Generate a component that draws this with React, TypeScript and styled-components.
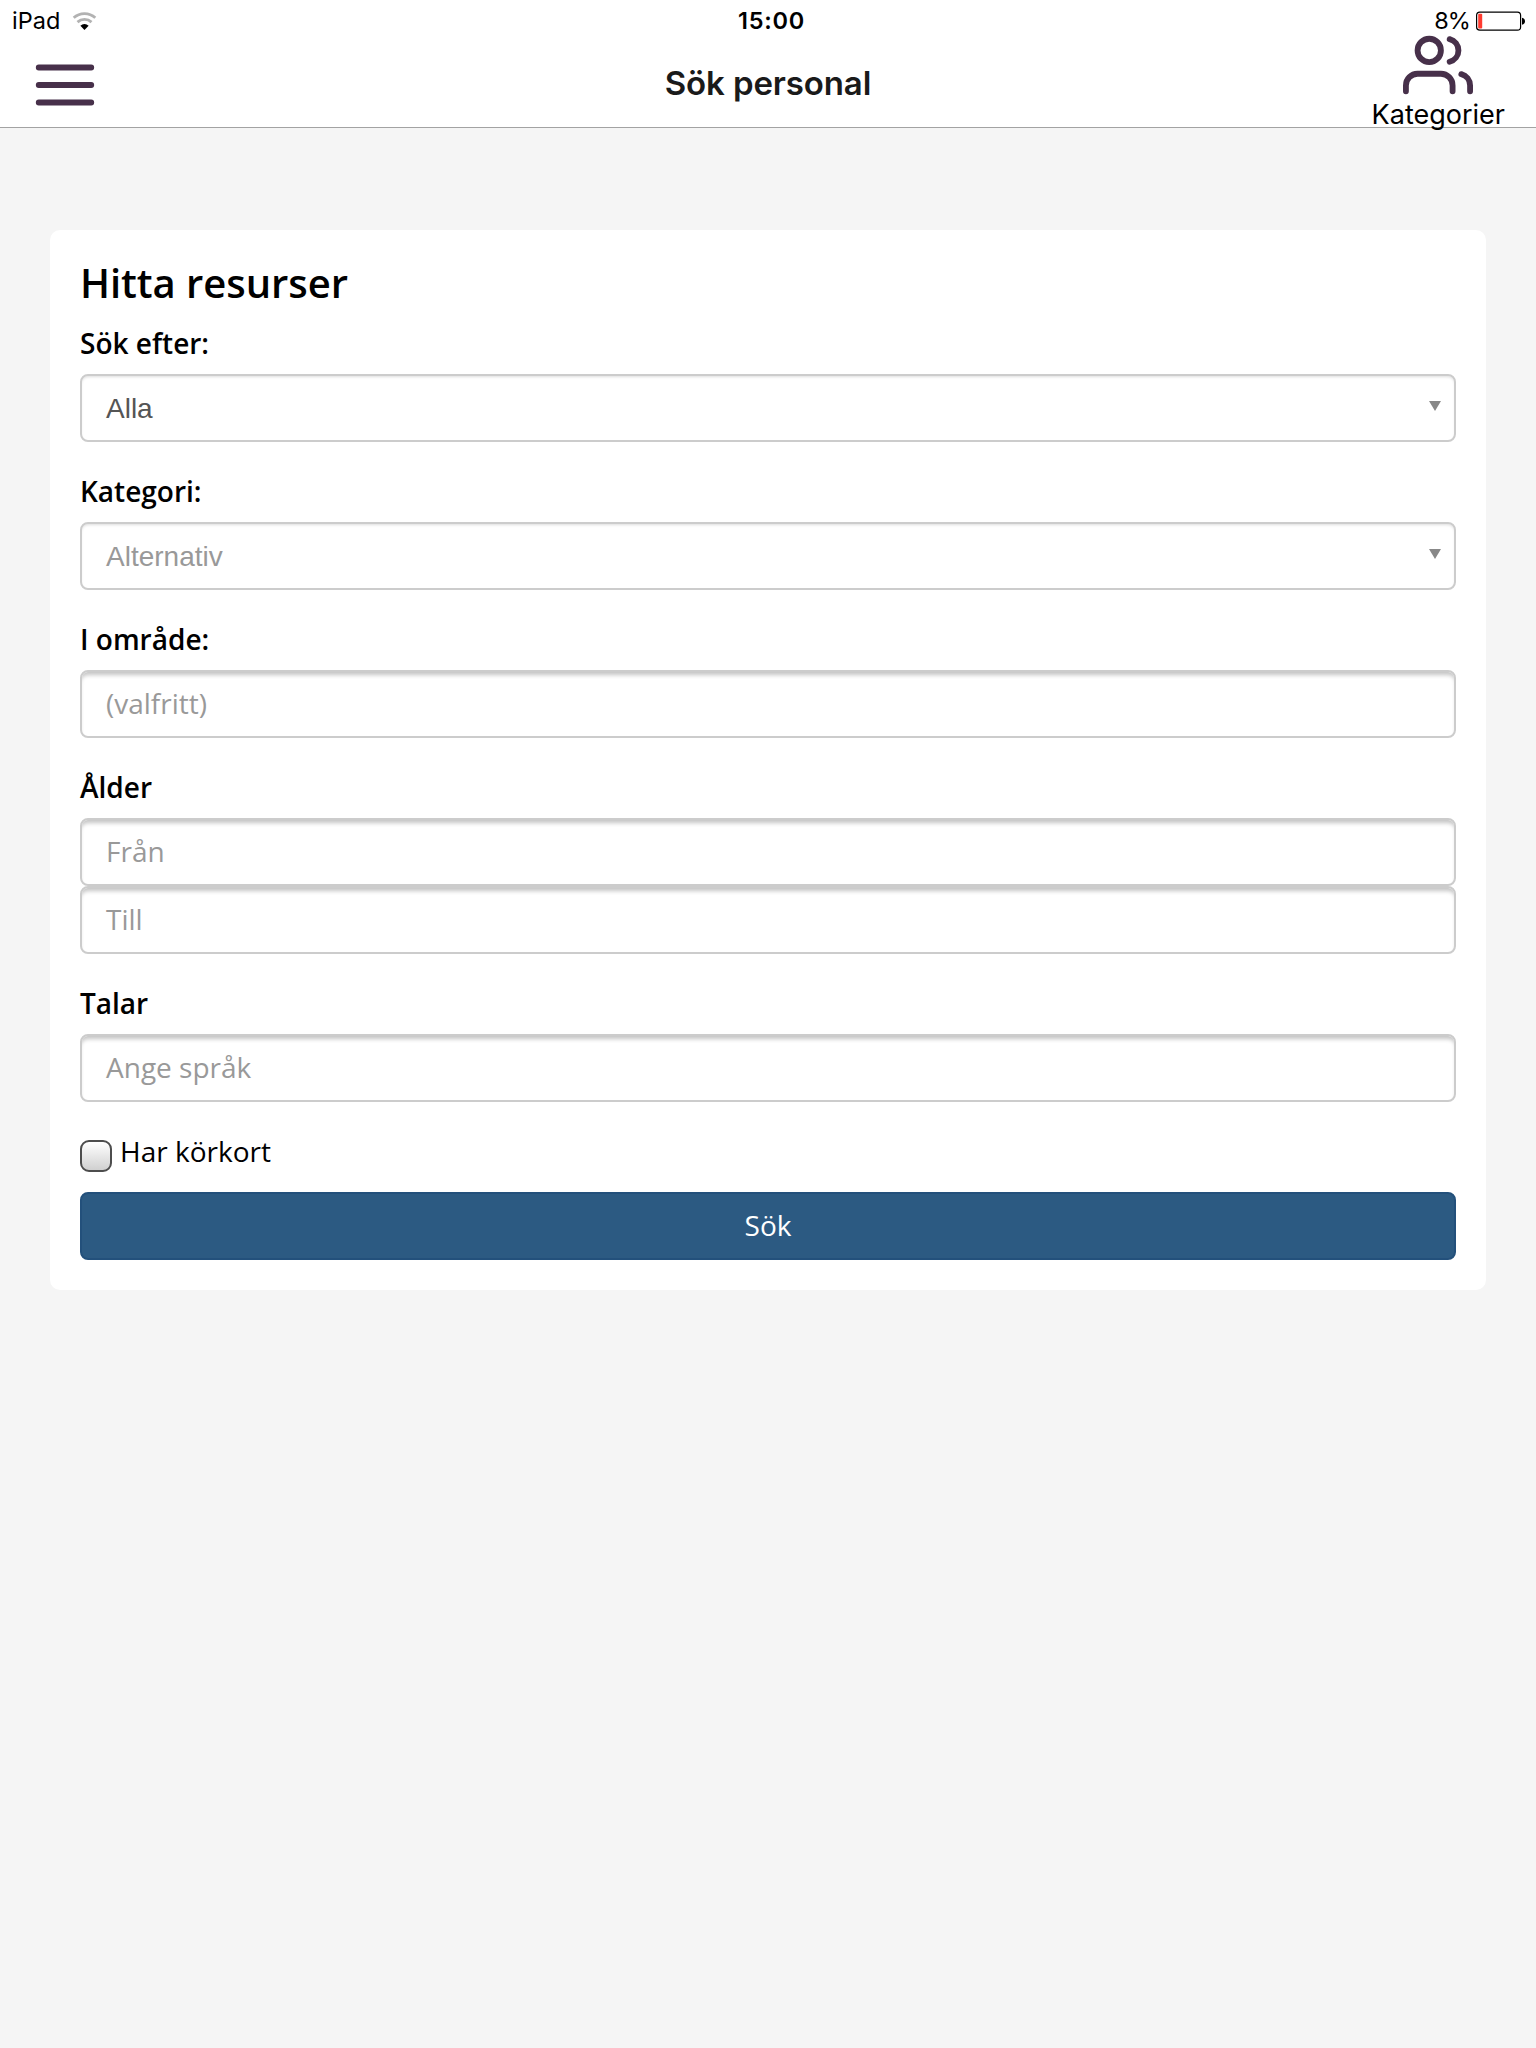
import React from "react";
import styled, { createGlobalStyle } from "styled-components";

const SYSTEM = `Inter, "Liberation Sans", sans-serif`;
const BODY = `"Open Sans", "Noto Sans", sans-serif`;

const GlobalStyle = createGlobalStyle`
  *, *::before, *::after { box-sizing: border-box; }
  body { margin: 0; background: #f5f5f5; color: #000; font-family: ${BODY}; }
`;

const Page = styled.div`
  min-height: 2048px;
  background: #f5f5f5;
`;

const TopBar = styled.header`
  height: 128px;
  background: #fff;
  border-bottom: 1px solid #a3a3a3;
  font-family: ${SYSTEM};
`;

const StatusBar = styled.div`
  display: grid;
  grid-template-columns: 1fr auto 1fr;
  align-items: center;
  height: 40px;
  padding: 1px 10px 0 12px;
  font-size: 23.5px;
  line-height: 40px;
`;

const Carrier = styled.div`
  display: flex;
  align-items: center;
  gap: 12px;
`;

const Clock = styled.div`
  padding-left: 5px;
  font-weight: 600;
  letter-spacing: 0.8px;
`;

const Power = styled.div`
  display: flex;
  align-items: center;
  justify-content: flex-end;
  gap: 6px;
`;

const Charge = styled.span`
  letter-spacing: -0.9px;
`;

const NavBar = styled.div`
  display: grid;
  grid-template-columns: 1fr auto 1fr;
  height: 87px;
`;

const IconButton = styled.button`
  display: flex;
  padding: 10px 0 0 30px;
  border: 0;
  background: none;
  align-self: start;
  justify-self: start;
`;

const PageTitle = styled.h1`
  margin: 0;
  padding-top: 22px;
  color: #1a1a1a;
  font-size: 33px;
  font-weight: 600;
  line-height: 42px;
  letter-spacing: -0.12px;
`;

const CategoryButton = styled.button`
  display: flex;
  flex-direction: column;
  align-items: center;
  justify-self: end;
  align-self: start;
  margin: -10px 31px 0 0;
  padding: 0;
  border: 0;
  background: none;
  color: #000;
  font-family: inherit;
  font-size: 27px;
  line-height: 30px;
`;

const Content = styled.main`
  padding: 102px 50px 0;
`;

const Card = styled.form`
  display: flex;
  flex-direction: column;
  height: 1060px;
  padding: 25px 30px 30px;
  border-radius: 10px;
  background: #fff;
`;

const Heading = styled.h2`
  margin: 0 0 12px;
  font-size: 40px;
  font-weight: 600;
  line-height: 56px;
  letter-spacing: -0.06px;
`;

const Group = styled.div`
  display: flex;
  flex-direction: column;
  margin-bottom: 29px;
`;

const Label = styled.label`
  margin-bottom: 11px;
  font-size: 28px;
  font-weight: 600;
  line-height: 40px;
`;

const Field = styled.div<{ $filled?: boolean }>`
  display: flex;
  align-items: center;
  justify-content: space-between;
  height: 68px;
  padding: 0 24px 2px;
  border: 2px solid #ccc;
  border-radius: 8px;
  background: #fff;
  box-shadow: inset 0 5px 4px -2px #c4c4c4;
  color: ${(p) => (p.$filled ? "#555" : "#999")};
  font-size: 28px;
  line-height: 40px;
`;

const Select = styled(Field)`
  padding: 2px 13px 0 24px;
  box-shadow: inset 0 2px 3px -1px #ddd;
  font-family: "Liberation Sans", Arial, sans-serif;
`;

const Arrow = styled.span`
  width: 0;
  height: 0;
  margin-bottom: 6px;
  border: 6px solid transparent;
  border-top: 10px solid #888;
  border-bottom: 0;
`;

const CheckRow = styled.label`
  display: flex;
  align-items: flex-start;
  gap: 8px;
  height: 61px;
  font-size: 28px;
  line-height: 40px;
`;

const CheckBox = styled.span`
  width: 32px;
  height: 32px;
  margin-top: 9px;
  border: 2px solid #4d4d4d;
  border-radius: 9px;
  background: linear-gradient(#fff, #d0d0d0);
`;

const Submit = styled.button`
  height: 68px;
  padding: 0 0 2px;
  border: 2px solid #23507b;
  border-radius: 8px;
  background: #2c5a82;
  color: #fff;
  font-family: inherit;
  font-size: 28px;
  line-height: 40px;
`;

const Wifi = () => (
  <svg width="26" height="20" viewBox="0 0 26 20" fill="none">
    <path d="M1.7 6.8A16 16 0 0 1 23.3 6.8" stroke="#b2b2b2" strokeWidth="2.8" />
    <path d="M5.5 11.1A10.4 10.4 0 0 1 19.5 11.1" stroke="#b2b2b2" strokeWidth="2.8" />
    <path d="M12.5 19L8.4 14.7A6 6 0 0 1 16.6 14.7Z" fill="#000" />
  </svg>
);

const Battery = () => (
  <svg width="50" height="20" viewBox="0 0 50 20" fill="none">
    <rect x="0.6" y="1.1" width="44" height="18" rx="3.2" stroke="#000" strokeWidth="1.2" />
    <rect x="2.2" y="2.7" width="4" height="14.8" rx="1" fill="#ff3b30" />
    <path d="M46 6.7C48 7.2 49 8.5 49 10.2S48 13.2 46 13.8Z" fill="#000" />
  </svg>
);

const MenuIcon = () => (
  <svg width="70" height="70" viewBox="0 0 24 24" stroke="#47304a" strokeWidth="2" strokeLinecap="round">
    <path d="M3 6h18M3 12h18M3 18h18" />
  </svg>
);

const UsersIcon = () => (
  <svg width="70" height="70" viewBox="0 0 24 24" fill="none" stroke="#47304a" strokeWidth="2" strokeLinecap="round" strokeLinejoin="round">
    <path d="M17 21v-2a4 4 0 0 0-4-4H5a4 4 0 0 0-4 4v2" />
    <circle cx="9" cy="7" r="4" />
    <path d="M23 21v-2a4 4 0 0 0-3-3.87M16 3.13a4 4 0 0 1 0 7.75" />
  </svg>
);

export default function App() {
  return (
    <Page>
      <GlobalStyle />
      <TopBar>
        <StatusBar>
          <Carrier>
            <span>iPad</span>
            <Wifi />
          </Carrier>
          <Clock>15:00</Clock>
          <Power>
            <Charge>8%</Charge>
            <Battery />
          </Power>
        </StatusBar>
        <NavBar>
          <IconButton type="button" aria-label="Meny">
            <MenuIcon />
          </IconButton>
          <PageTitle>Sök personal</PageTitle>
          <CategoryButton type="button">
            <UsersIcon />
            <span>Kategorier</span>
          </CategoryButton>
        </NavBar>
      </TopBar>
      <Content>
        <Card>
          <Heading>Hitta resurser</Heading>
          <Group>
            <Label>Sök efter:</Label>
            <Select $filled>
              <span>Alla</span>
              <Arrow />
            </Select>
          </Group>
          <Group>
            <Label>Kategori:</Label>
            <Select>
              <span>Alternativ</span>
              <Arrow />
            </Select>
          </Group>
          <Group>
            <Label>I område:</Label>
            <Field>(valfritt)</Field>
          </Group>
          <Group>
            <Label>Ålder</Label>
            <Field>Från</Field>
            <Field>Till</Field>
          </Group>
          <Group>
            <Label>Talar</Label>
            <Field>Ange språk</Field>
          </Group>
          <CheckRow>
            <CheckBox />
            <span>Har körkort</span>
          </CheckRow>
          <Submit type="button">Sök</Submit>
        </Card>
      </Content>
    </Page>
  );
}
